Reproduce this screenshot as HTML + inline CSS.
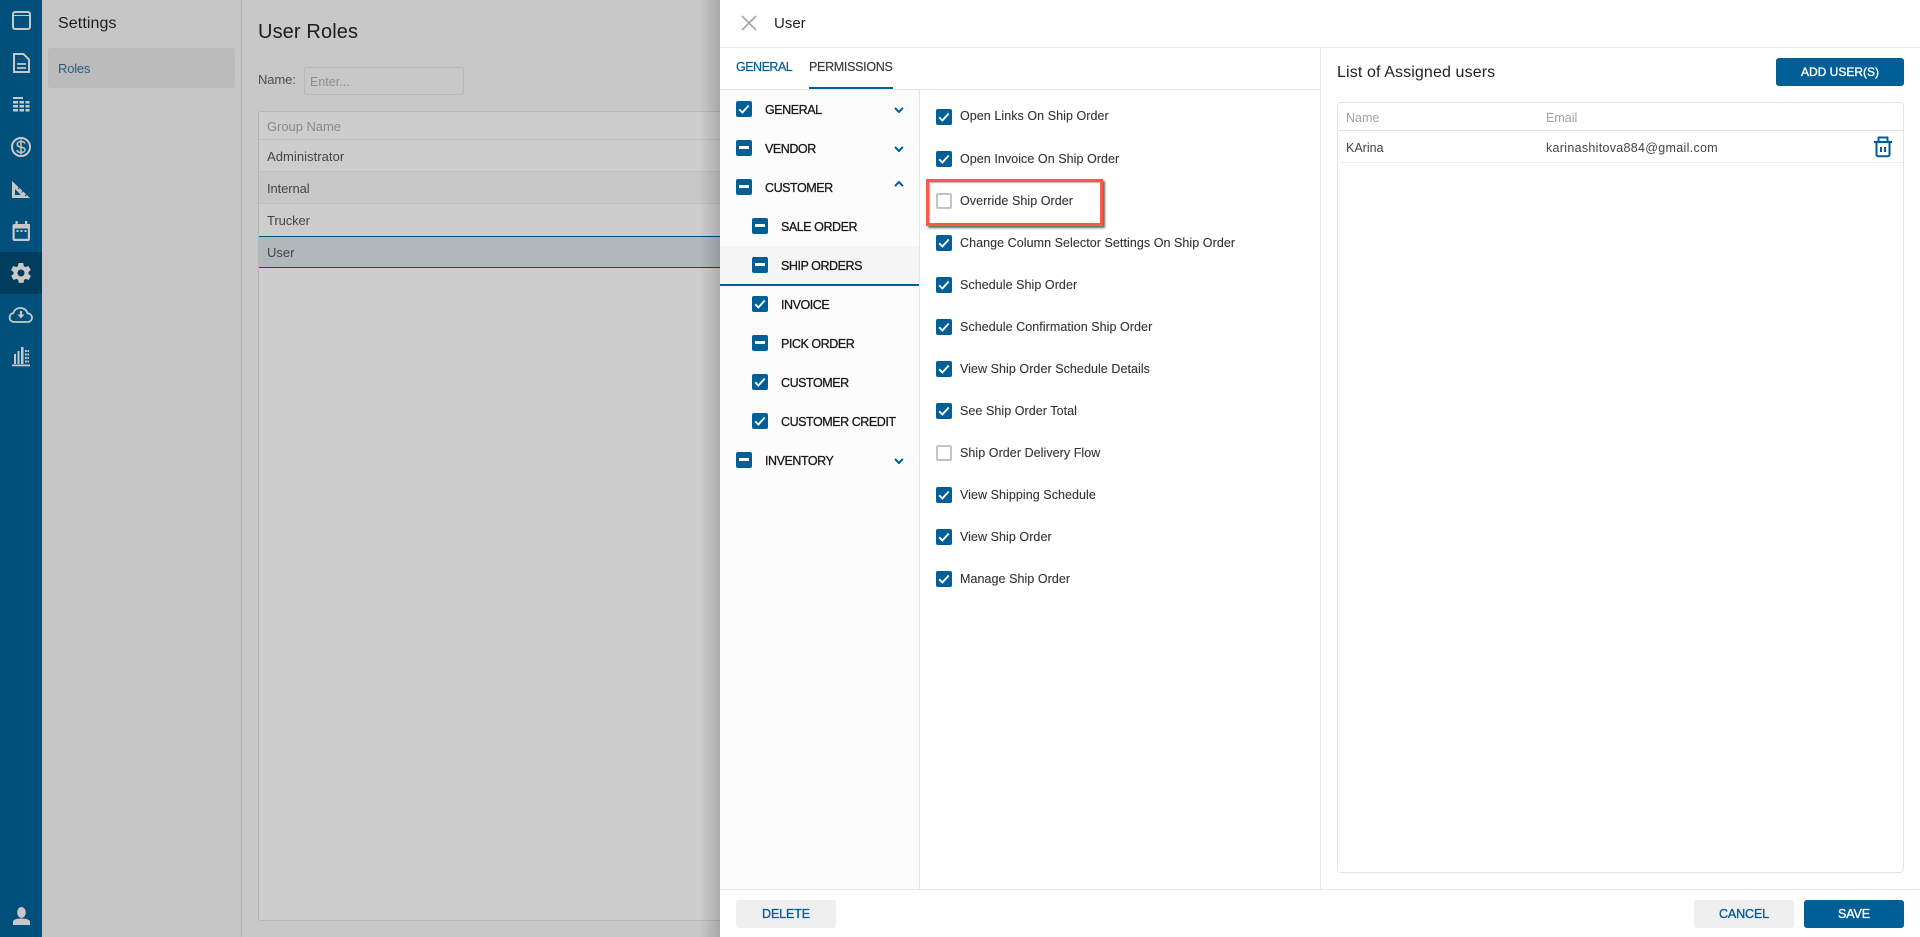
<!DOCTYPE html>
<html><head><meta charset="utf-8"><title>User Roles</title>
<style>
html,body{margin:0;padding:0;width:1920px;height:937px;overflow:hidden;background:#c8c8c8;font-family:"Liberation Sans",sans-serif;}
*{box-sizing:border-box}
.a{position:absolute}
.t{position:absolute;white-space:nowrap;font-size:13px;line-height:20px;height:20px;margin-top:1px}
.side{left:0;top:0;width:42px;height:937px;background:#00507b}
.row{position:absolute;left:259px;width:470px;height:32px;border-bottom:1px solid #bfbfbf}
.cb{position:absolute;width:16px;height:16px;background:#005f96;border-radius:2px}
.cb svg{position:absolute;left:0;top:0}
.cb.off{background:#fff;border:2px solid #c4c4c4}
.cb.dash::after{content:"";position:absolute;left:3px;top:6px;width:10px;height:3.4px;background:#fff}
.lab{font-size:12.5px;color:#1a1a1a;-webkit-text-stroke:.3px #1a1a1a;letter-spacing:-.45px}
.per{color:#333;font-size:12.5px;letter-spacing:.06px;-webkit-text-stroke:.1px #333}
.chev{position:absolute;left:893px}
.btn{position:absolute;border-radius:3px;text-align:center;font-size:12.5px;line-height:28px;height:28px;-webkit-text-stroke:.35px;letter-spacing:-.12px}
</style></head><body>

<div class="a side"></div>
<div class="a" style="left:0;top:252px;width:42px;height:42px;background:#003c5d"></div>

<svg class="a" style="left:0;top:0" width="42" height="380" fill="none" stroke="#c8c8c8" stroke-width="2">
<rect x="13" y="12" width="17" height="17" rx="2"/><path d="M13 15.500h17" stroke-width="1"/>
<path d="M14 54h9.500l5.500 5.500V72H14z" stroke-width="2"/><path d="M17 64h9M17 68h9" stroke-width="1.700"/>
<g fill="#c8c8c8" stroke="none">
<rect x="13" y="97" width="10" height="2"/>
<rect x="13" y="101" width="5" height="2.500"/><rect x="19.500" y="101" width="4.500" height="2.500"/><rect x="25.500" y="101" width="4" height="2.500"/>
<rect x="13" y="105" width="5" height="2.500"/><rect x="19.500" y="105" width="4.500" height="2.500"/><rect x="25.500" y="105" width="4" height="2.500"/>
<rect x="13" y="109" width="5" height="2.500"/><rect x="19.500" y="109" width="4.500" height="2.500"/><rect x="25.500" y="109" width="4" height="2.500"/>
</g>
<circle cx="21" cy="147" r="9"/>
<path d="M25 143.500c-.8-1.500-2-2-4-2-2.300 0-3.800 1.200-3.800 2.800 0 4 7.800 1.800 7.800 5.500 0 1.600-1.600 2.700-4 2.700-2.200 0-3.700-.9-4.200-2.500M21 139.500v15" stroke-width="1.500"/>
<path d="M12 181v17h18z" fill="#c8c8c8" stroke="none"/><path d="M15 189v6h6z" fill="#00507b" stroke="none"/>
<path d="M19.500 187.500l-1.500 1.500M23 191l-1.500 1.500M26.500 194.500l-1.500 1.500" stroke="#00507b" stroke-width="1"/>
<g fill="#c8c8c8" stroke="none">
<path fill-rule="evenodd" d="M14.500 224H30v15a2 2 0 0 1-2 2H14.500a2 2 0 0 1-2-2v-13a2 2 0 0 1 2-2zM14.700 228.500v10.300h13.100v-10.300z"/>
<rect x="15.500" y="221" width="2.200" height="4"/><rect x="25" y="221" width="2.200" height="4"/>
<rect x="16.500" y="230" width="2" height="2"/><rect x="20.500" y="230" width="2" height="2"/><rect x="24.500" y="230" width="2" height="2"/>
</g>
<g transform="translate(9 261)"><path fill="#c8c8c8" stroke="none" d="M19.400 13c0-.3.100-.6.100-1s0-.7-.1-1l2.100-1.600c.2-.2.200-.4.100-.6l-2-3.500c-.1-.2-.4-.3-.6-.2l-2.500 1c-.5-.4-1.100-.7-1.700-1l-.4-2.600c0-.3-.2-.5-.5-.5h-4c-.2 0-.4.200-.5.400l-.4 2.700c-.6.200-1.100.6-1.700 1l-2.500-1c-.2-.1-.5 0-.6.200l-2 3.500c-.1.200-.1.500.1.600L4.600 11c0 .3-.1.700-.1 1s0 .7.100 1l-2.100 1.600c-.2.200-.2.400-.1.600l2 3.500c.1.200.4.300.6.200l2.500-1c.5.400 1.100.7 1.700 1l.4 2.600c0 .2.200.4.500.4h4c.2 0 .4-.2.500-.4l.4-2.600c.6-.3 1.200-.6 1.700-1l2.500 1c.2.100.5 0 .6-.2l2-3.500c.1-.2.100-.5-.1-.6zM12 15.500c-1.900 0-3.500-1.600-3.500-3.500s1.600-3.500 3.500-3.500 3.500 1.600 3.500 3.500-1.600 3.500-3.500 3.500z"/></g>
<path d="M14 322a4.500 4.500 0 0 1-.6-8.950C14.300 310 17 308 20.500 308c3.500 0 6.300 2.200 7 5.200 2.700.3 4.500 2.300 4.500 4.600 0 2.500-2 4.200-4.500 4.200z" stroke-width="1.800"/>
<path d="M21 311v4" stroke-width="2.200"/><path d="M17.500 314.500h7l-3.500 4z" fill="#c8c8c8" stroke="none"/>
<g fill="#c8c8c8" stroke="none">
<rect x="14" y="354" width="2" height="10"/><rect x="17.500" y="351" width="2" height="13"/><rect x="21" y="347" width="2.500" height="17"/>
<rect x="25" y="350" width="1.800" height="2"/><rect x="25" y="353.500" width="1.800" height="2"/><rect x="25" y="357" width="1.800" height="2"/><rect x="25" y="360.500" width="1.800" height="2"/>
<rect x="27.500" y="350" width="1.500" height="2"/><rect x="27.500" y="353.500" width="1.500" height="2"/><rect x="27.500" y="357" width="1.500" height="2"/><rect x="27.500" y="360.500" width="1.500" height="2"/>
<rect x="12" y="364.500" width="18" height="1.800"/>
</g>
</svg>
<svg class="a" style="left:0;top:900px" width="42" height="37" fill="#c8c8c8"><ellipse cx="21.500" cy="12.500" rx="4.300" ry="5.500"/><path d="M13 25v-3.500c0-1.500 3-3 8.500-3s8.500 1.500 8.500 3V25z"/></svg>

<!-- settings panel -->
<div class="a" style="left:42px;top:0;width:200px;height:937px;background:#c6c6c6;border-right:1px solid #adadad"></div>
<div class="a" style="left:48px;top:48px;width:187px;height:40px;background:#bbb;border-radius:3px"></div>
<div class="t" style="left:58px;top:13px;font-size:16px;letter-spacing:.1px;color:#1d1d1d">Settings</div>
<div class="t" style="left:58px;top:58px;color:#2a5c7d;letter-spacing:-.2px">Roles</div>

<!-- main -->
<div class="t" style="left:258px;top:20px;font-size:20px;letter-spacing:.12px;line-height:22px;height:22px;color:#1c1c1c">User Roles</div>
<div class="t" style="left:258px;top:69px;color:#4d4d4d;letter-spacing:-.1px">Name:</div>
<div class="a" style="left:304px;top:67px;width:160px;height:28px;border:1px solid #b8b8b8;border-radius:3px"></div>
<div class="t" style="left:310px;top:71px;color:#8e8e8e;font-size:12.5px">Enter...</div>

<div class="a" style="left:258px;top:111px;width:480px;height:810px;background:#cdcdcd;border:1px solid #b5b5b5;border-radius:3px"></div>
<div class="row" style="top:111px;height:29px"></div>
<div class="row" style="top:140px;height:32px"></div>
<div class="row" style="top:172px;background:#c7c7c7"></div>
<div class="row" style="top:204px;border-bottom:0"></div>
<div class="a" style="left:259px;top:236px;width:470px;height:32px;background:#b0b8bc;border-top:1px solid #0a4f75;border-bottom:1px solid #0a4f75"></div>
<div class="t" style="left:267px;top:116px;color:#8a8a8a;letter-spacing:-.05px">Group Name</div>
<div class="t" style="left:267px;top:146px;color:#444;letter-spacing:.05px">Administrator</div>
<div class="t" style="left:267px;top:178px;color:#444;letter-spacing:-.1px">Internal</div>
<div class="t" style="left:267px;top:210px;color:#444;letter-spacing:-.1px">Trucker</div>
<div class="t" style="left:267px;top:242px;color:#444">User</div>

<div class="a" style="left:700px;top:0;width:20px;height:937px;background:linear-gradient(to right,rgba(0,0,0,0),rgba(0,0,0,.16))"></div>

<!-- drawer -->
<div class="a" style="left:720px;top:0;width:1200px;height:937px;background:#fff"></div>
<div class="a" style="left:720px;top:47px;width:1200px;height:1px;background:#e6e6e6"></div>
<svg class="a" style="left:741px;top:15px" width="16" height="16" stroke="#a5a5a5" stroke-width="1.600" fill="none"><path d="M1 1l14 14M15 1L1 15"/></svg>
<div class="t" style="left:774px;top:13px;font-size:15px;color:#222">User</div>

<div class="t" style="left:736px;top:56px;color:#005f96;font-size:12.5px;-webkit-text-stroke:.2px #005f96;letter-spacing:-.5px">GENERAL</div>
<div class="t" style="left:809px;top:56px;color:#333;font-size:12.5px;-webkit-text-stroke:.2px #555;letter-spacing:-.3px">PERMISSIONS</div>
<div class="a" style="left:809px;top:87px;width:84px;height:2px;background:#005f96"></div>
<div class="a" style="left:720px;top:89px;width:600px;height:1px;background:#e6e6e6"></div>

<div class="a" style="left:720px;top:90px;width:199px;height:799px;background:#fcfcfc"></div>
<div class="a" style="left:919px;top:90px;width:1px;height:799px;background:#e6e6e6"></div>
<div class="a" style="left:1320px;top:48px;width:1px;height:841px;background:#e6e6e6"></div>
<div class="a" style="left:720px;top:889px;width:1200px;height:1px;background:#e6e6e6"></div>
<div class="a" style="left:720px;top:246px;width:199px;height:38px;background:#f5f5f5"></div>
<div class="a" style="left:720px;top:284px;width:199px;height:2px;background:#005f96"></div>

<!-- left tree -->
<div class="cb" style="left:736px;top:101px"><svg width="16" height="16" fill="none" stroke="#fff" stroke-width="1.900"><path d="M3.200 8.300l3.200 3.200 6.300-7"/></svg></div>
<div class="t lab" style="left:765px;top:99px">GENERAL</div>
<div class="cb dash" style="left:736px;top:140px"></div>
<div class="t lab" style="left:765px;top:138px">VENDOR</div>
<div class="cb dash" style="left:736px;top:179px"></div>
<div class="t lab" style="left:765px;top:177px">CUSTOMER</div>
<div class="cb dash" style="left:752px;top:218px"></div>
<div class="t lab" style="left:781px;top:216px">SALE ORDER</div>
<div class="cb dash" style="left:752px;top:257px"></div>
<div class="t lab" style="left:781px;top:255px">SHIP ORDERS</div>
<div class="cb" style="left:752px;top:296px"><svg width="16" height="16" fill="none" stroke="#fff" stroke-width="1.900"><path d="M3.200 8.300l3.200 3.200 6.300-7"/></svg></div>
<div class="t lab" style="left:781px;top:294px">INVOICE</div>
<div class="cb dash" style="left:752px;top:335px"></div>
<div class="t lab" style="left:781px;top:333px">PICK ORDER</div>
<div class="cb" style="left:752px;top:374px"><svg width="16" height="16" fill="none" stroke="#fff" stroke-width="1.900"><path d="M3.200 8.300l3.200 3.200 6.300-7"/></svg></div>
<div class="t lab" style="left:781px;top:372px">CUSTOMER</div>
<div class="cb" style="left:752px;top:413px"><svg width="16" height="16" fill="none" stroke="#fff" stroke-width="1.900"><path d="M3.200 8.300l3.200 3.200 6.300-7"/></svg></div>
<div class="t lab" style="left:781px;top:411px">CUSTOMER CREDIT</div>
<div class="cb dash" style="left:736px;top:452px"></div>
<div class="t lab" style="left:765px;top:450px">INVENTORY</div>

<svg class="chev" style="top:106px" width="12" height="8" fill="none" stroke="#005f96" stroke-width="2"><path d="M2 2l3.900 3.900L9.800 2"/></svg>
<svg class="chev" style="top:145px" width="12" height="8" fill="none" stroke="#005f96" stroke-width="2"><path d="M2 2l3.900 3.900L9.800 2"/></svg>
<svg class="chev" style="top:180px" width="12" height="8" fill="none" stroke="#005f96" stroke-width="2"><path d="M2 6l3.900-3.900L9.800 6"/></svg>
<svg class="chev" style="top:457px" width="12" height="8" fill="none" stroke="#005f96" stroke-width="2"><path d="M2 2l3.900 3.900L9.800 2"/></svg>

<!-- permissions -->
<div class="cb" style="left:936px;top:109px"><svg width="16" height="16" fill="none" stroke="#fff" stroke-width="1.900"><path d="M3.200 8.300l3.200 3.200 6.300-7"/></svg></div>
<div class="t per" style="left:960px;top:105px">Open Links On Ship Order</div>
<div class="cb" style="left:936px;top:151px"><svg width="16" height="16" fill="none" stroke="#fff" stroke-width="1.900"><path d="M3.200 8.300l3.200 3.200 6.300-7"/></svg></div>
<div class="t per" style="left:960px;top:148px">Open Invoice On Ship Order</div>
<div class="a" style="left:926px;top:179px;width:177px;height:47px;border:3px solid #fa5a4d;box-shadow:2px 2px 2px rgba(0,0,0,.6), inset 1px 1px 1px rgba(0,0,0,.3)"></div>
<div class="cb off" style="left:936px;top:193px"></div>
<div class="t per" style="left:960px;top:190px">Override Ship Order</div>
<div class="cb" style="left:936px;top:235px"><svg width="16" height="16" fill="none" stroke="#fff" stroke-width="1.900"><path d="M3.200 8.300l3.200 3.200 6.300-7"/></svg></div>
<div class="t per" style="left:960px;top:232px">Change Column Selector Settings On Ship Order</div>
<div class="cb" style="left:936px;top:277px"><svg width="16" height="16" fill="none" stroke="#fff" stroke-width="1.900"><path d="M3.200 8.300l3.200 3.200 6.300-7"/></svg></div>
<div class="t per" style="left:960px;top:274px">Schedule Ship Order</div>
<div class="cb" style="left:936px;top:319px"><svg width="16" height="16" fill="none" stroke="#fff" stroke-width="1.900"><path d="M3.200 8.300l3.200 3.200 6.300-7"/></svg></div>
<div class="t per" style="left:960px;top:316px">Schedule Confirmation Ship Order</div>
<div class="cb" style="left:936px;top:361px"><svg width="16" height="16" fill="none" stroke="#fff" stroke-width="1.900"><path d="M3.200 8.300l3.200 3.200 6.300-7"/></svg></div>
<div class="t per" style="left:960px;top:358px">View Ship Order Schedule Details</div>
<div class="cb" style="left:936px;top:403px"><svg width="16" height="16" fill="none" stroke="#fff" stroke-width="1.900"><path d="M3.200 8.300l3.200 3.200 6.300-7"/></svg></div>
<div class="t per" style="left:960px;top:400px">See Ship Order Total</div>
<div class="cb off" style="left:936px;top:445px"></div>
<div class="t per" style="left:960px;top:442px">Ship Order Delivery Flow</div>
<div class="cb" style="left:936px;top:487px"><svg width="16" height="16" fill="none" stroke="#fff" stroke-width="1.900"><path d="M3.200 8.300l3.200 3.200 6.300-7"/></svg></div>
<div class="t per" style="left:960px;top:484px">View Shipping Schedule</div>
<div class="cb" style="left:936px;top:529px"><svg width="16" height="16" fill="none" stroke="#fff" stroke-width="1.900"><path d="M3.200 8.300l3.200 3.200 6.300-7"/></svg></div>
<div class="t per" style="left:960px;top:526px">View Ship Order</div>
<div class="cb" style="left:936px;top:571px"><svg width="16" height="16" fill="none" stroke="#fff" stroke-width="1.900"><path d="M3.200 8.300l3.200 3.200 6.300-7"/></svg></div>
<div class="t per" style="left:960px;top:568px">Manage Ship Order</div>

<!-- right panel -->
<div class="t" style="left:1337px;top:62px;font-size:16px;color:#222;letter-spacing:.12px">List of Assigned users</div>
<div class="btn" style="left:1776px;top:58px;width:128px;background:#005f96;color:#fff;-webkit-text-stroke-color:#fff;font-size:12px;letter-spacing:0">ADD USER(S)</div>
<div class="a" style="left:1337px;top:102px;width:567px;height:771px;border:1px solid #e3e3e3;border-radius:4px"></div>
<div class="a" style="left:1338px;top:130px;width:565px;height:1px;background:#e3e3e3"></div>
<div class="a" style="left:1338px;top:162px;width:565px;height:1px;background:#efefef"></div>
<div class="t" style="left:1346px;top:107px;color:#a3a3a3;font-size:12.5px">Name</div>
<div class="t" style="left:1546px;top:107px;color:#a3a3a3;font-size:12.5px">Email</div>
<div class="t" style="left:1346px;top:137px;color:#444;font-size:12.5px">KArina</div>
<div class="t" style="left:1546px;top:137px;color:#444;font-size:12.5px;letter-spacing:.3px">karinashitova884@gmail.com</div>
<svg class="a" style="left:1873px;top:135px" width="20" height="24" fill="none" stroke="#005f96">
<path d="M5.500 6.500V2.500h9v4" stroke-width="1.900"/><path d="M1 7h18" stroke-width="2.200"/>
<path d="M3.500 8v11.500c0 1 .8 1.800 1.800 1.800h9.400c1 0 1.800-.8 1.800-1.800V8" stroke-width="2"/>
<path d="M8 12v5M12 12v5" stroke-width="2"/></svg>

<!-- footer -->
<div class="btn" style="left:736px;top:900px;width:100px;background:#efefef;color:#005f96;-webkit-text-stroke-color:#005f96">DELETE</div>
<div class="btn" style="left:1694px;top:900px;width:100px;background:#efefef;color:#005f96;-webkit-text-stroke-color:#005f96">CANCEL</div>
<div class="btn" style="left:1804px;top:900px;width:100px;background:#005f96;color:#fff;-webkit-text-stroke-color:#fff">SAVE</div>

</body></html>
